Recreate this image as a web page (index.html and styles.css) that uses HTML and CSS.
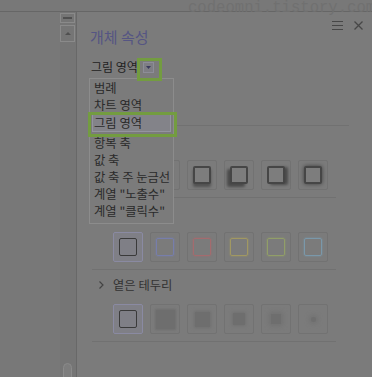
FILE: index.html
```html
<!DOCTYPE html>
<html>
<head>
<meta name="viewport" content="width=device-width, initial-scale=1">
<link rel="stylesheet" href="styles.css">
</head>
<body>

<div class="watermark">codeomni.tistory.com</div>
<div class="topbar"></div>

<div class="main">
  <div class="sheet"></div>

  <div class="scroller">
    <div class="sbtn sbtn-min"><span></span></div>
    <div class="sbtn sbtn-up"><span></span></div>
    <div class="thumb"></div>
  </div>

  <div class="panel">
    <div class="tools">
      <svg width="11" height="9" viewBox="0 0 11 9"><path d="M0 0.5H11M0 4.5H11M0 8.5H11" stroke="#474747" stroke-width="1"/></svg>
      <svg width="9" height="9" viewBox="0 0 9 9"><path d="M0.5 0.5L8.5 8.5M8.5 0.5L0.5 8.5" stroke="#474747" stroke-width="1.3"/></svg>
    </div>
    <h1 class="title">개체 속성</h1>

    <div class="picker">
      <span class="picker-label">그림 영역</span>
      <span class="picker-btn"><svg width="5" height="3" viewBox="0 0 5 3"><path d="M0 0H5L2.5 3Z" fill="#3a3a5c"/></svg></span>
      <div class="mark mark-btn"></div>

      <ul class="menu">
        <li>범례</li>
        <li>차트 영역</li>
        <li class="active">그림 영역</li>
        <li>항복 축</li>
        <li>값 축</li>
        <li>값 축 주 눈금선</li>
        <li>계열 "노출수"</li>
        <li>계열 "클릭수"</li>
        <div class="mark mark-item"></div>
      </ul>
    </div>

    <div class="sep sep-wide"></div>

    <!-- shadow presets (heading sits under the open list) -->
    <div class="sec-head"></div>
    <div class="tiles">
      <div class="tile"><i class="sq sh-1"></i></div>
      <div class="tile"><i class="sq sh-2"></i></div>
      <div class="tile"><i class="sq sh-3"></i></div>
      <div class="tile"><i class="sq sh-4"></i></div>
      <div class="tile"><i class="sq sh-5"></i></div>
      <div class="tile"><i class="sq sh-6"></i></div>
    </div>
    <div class="sep"></div>

    <!-- glow presets -->
    <div class="sec-head"></div>
    <div class="tiles">
      <div class="tile selected"><i class="sq plain"></i></div>
      <div class="tile"><i class="sq glow glow-blue"></i></div>
      <div class="tile"><i class="sq glow glow-red"></i></div>
      <div class="tile"><i class="sq glow glow-yellow"></i></div>
      <div class="tile"><i class="sq glow glow-green"></i></div>
      <div class="tile"><i class="sq glow glow-sky"></i></div>
    </div>
    <div class="sep"></div>

    <!-- soft edges -->
    <div class="sec-head"><svg width="5" height="8" viewBox="0 0 5 8"><path d="M0.5 0.5L4 4L0.5 7.5" fill="none" stroke="#444" stroke-width="1.2"/></svg><span>옅은 테두리</span></div>
    <div class="tiles">
      <div class="tile selected"><i class="sq plain"></i></div>
      <div class="tile"><i class="soft soft-1"></i></div>
      <div class="tile"><i class="soft soft-2"></i></div>
      <div class="tile"><i class="soft soft-3"></i></div>
      <div class="tile"><i class="soft soft-4"></i></div>
      <div class="tile"><i class="soft soft-5"></i></div>
    </div>
    <div class="sep"></div>
  </div>
</div>

</body>
</html>
```

FILE: styles.css
```css
* {
  box-sizing: border-box;
}

body {
  margin: 0;
  width: 372px;
  height: 377px;
  overflow: hidden;
  background: #787878;
  font-family: "Noto Sans CJK KR", "Noto Sans", sans-serif;
  color: #2a2a2a;
}

/* faint watermark over the top edge */
.watermark {
  position: absolute;
  top: -1px;
  left: 188px;
  font-family: "Liberation Mono", monospace;
  font-size: 15.6px;
  line-height: 18px;
  color: #707070;
  white-space: nowrap;
}

.topbar {
  height: 12px;
  border-bottom: 1px solid #666;
}

.main {
  display: flex;
  height: 365px;
}

.sheet {
  width: 60px;
}

/* Scroll strip */
.scroller {
  width: 17px;
  padding-top: 1px;
  background: #757575;
  border-right: 1px solid #686868;
  display: flex;
  flex-direction: column;
}

.sbtn {
  width: 15px;
  border: 1px solid #8a8a8a;
  display: flex;
  align-items: center;
  justify-content: center;
}

.sbtn-min {
  height: 10px;
}

.sbtn-min span {
  width: 9px;
  height: 2px;
  background: #505050;
}

.sbtn-up {
  height: 17px;
  margin-top: 2px;
}

.sbtn-up span {
  width: 0;
  height: 0;
  border-left: 3px solid transparent;
  border-right: 3px solid transparent;
  border-bottom: 3px solid #505050;
}

.thumb {
  margin-top: auto;
  margin-left: 3px;
  width: 9px;
  height: 16px;
  margin-bottom: -2px;
  border: 1px solid #8a8a8a;
  border-radius: 5px 5px 0 0;
  background: #7d7d7d;
}

/* Properties panel */
.panel {
  flex: 1;
  background: #7b7b7b;
  padding: 9px 9px 0 13px;
}

.tools {
  height: 8px;
  display: flex;
  justify-content: flex-end;
  align-items: flex-start;
  gap: 11px;
}

.title {
  margin: 0;
  font-size: 15px;
  line-height: 16px;
  font-weight: normal;
  color: #555583;
}

.picker {
  position: relative;
  margin: 15px 0 0 1px;
  height: 14px;
  display: flex;
  align-items: center;
  gap: 5px;
}

.picker-label {
  font-size: 12px;
  line-height: 14px;
  color: #222;
}

.picker-btn {
  width: 11px;
  height: 11px;
  border: 1px solid #8d8d98;
  background: #7e7e84;
  display: flex;
  align-items: center;
  justify-content: center;
}

/* green annotation boxes */
.mark {
  position: absolute;
  border: 3px solid #739c40;
  z-index: 3;
}

.mark-btn {
  left: 46px;
  top: -2px;
  width: 25px;
  height: 23px;
}

.mark-item {
  left: -2px;
  top: 33px;
  width: 89px;
  height: 25px;
}

/* dropdown list */
.menu {
  position: absolute;
  left: -2px;
  top: 18px;
  width: 85px;
  margin: 0;
  padding: 1px 0 3px;
  list-style: none;
  background: #7b7b7b;
  border: 1px solid #8c8c8c;
  z-index: 2;
}

.menu li {
  font-size: 12.3px;
  line-height: 17px;
  padding-left: 4px;
  white-space: nowrap;
  color: #2a2a2a;
}

.menu li.active {
  line-height: 16px;
  margin: 0 2px 3px;
  padding-left: 1px;
  border: 1px solid #94949f;
  background: #838389;
}

.sep {
  height: 1px;
  background: #717171;
  margin: 7px 27px 0 2px;
}

.sep-wide {
  margin: 51px 14px 0 2px;
}

.sec-head {
  margin: 8px 0 12px 9px;
  height: 14px;
  display: flex;
  align-items: center;
  gap: 9px;
  font-size: 12.3px;
  line-height: 14px;
  color: #333;
}

.tiles {
  display: flex;
  gap: 7px;
  margin-left: 23px;
}

.tile {
  width: 30px;
  height: 30px;
  border: 1px solid #727272;
  border-radius: 2px;
  display: flex;
  align-items: center;
  justify-content: center;
}

.tile.selected {
  background: #7f7f86;
  border-color: #8a8aa2;
}

.sq {
  display: block;
  width: 18px;
  height: 18px;
  border-radius: 2px;
}

/* shadow row */
.sh-1, .sh-2, .sh-3, .sh-4, .sh-5, .sh-6 {
  border: 2px solid #464646;
  background: #7d7d7d;
}

.sh-1 { box-shadow: 2px 2px 3px rgba(0, 0, 0, 0.35); }
.sh-2 { box-shadow: -2px 2px 3px rgba(0, 0, 0, 0.35); }
.sh-3 { box-shadow: 0 3px 3px rgba(0, 0, 0, 0.35); }
.sh-4 { box-shadow: -3px 3px 3px rgba(0, 0, 0, 0.4); }
.sh-5 { box-shadow: 3px 1px 3px rgba(0, 0, 0, 0.4); }
.sh-6 { box-shadow: 0 0 4px rgba(0, 0, 0, 0.5); }

/* glow row */
.plain {
  border: 1.5px solid #3a3a3a;
}

.glow {
  border: 1.5px solid;
}

.glow-blue { border-color: #777eab; box-shadow: 0 0 2px #777eab; }
.glow-red { border-color: #a46b6e; box-shadow: 0 0 2px #a46b6e; }
.glow-yellow { border-color: #a19862; box-shadow: 0 0 2px #a19862; }
.glow-green { border-color: #919e68; box-shadow: 0 0 2px #919e68; }
.glow-sky { border-color: #7a98aa; box-shadow: 0 0 2px #7a98aa; }

/* soft edges row */
.soft {
  display: block;
  background: #6e6e6e;
}

.soft-1 { width: 19px; height: 19px; box-shadow: 0 0 2px 1px #6e6e6e; }
.soft-2 { width: 15px; height: 15px; box-shadow: 0 0 3px 1px #707070; }
.soft-3 { width: 12px; height: 12px; box-shadow: 0 0 3px 1px #717171; }
.soft-4 { width: 10px; height: 10px; box-shadow: 0 0 4px 2px #727272; }
.soft-5 { width: 5px; height: 5px; border-radius: 2px; box-shadow: 0 0 4px 2px #737373; }
```
